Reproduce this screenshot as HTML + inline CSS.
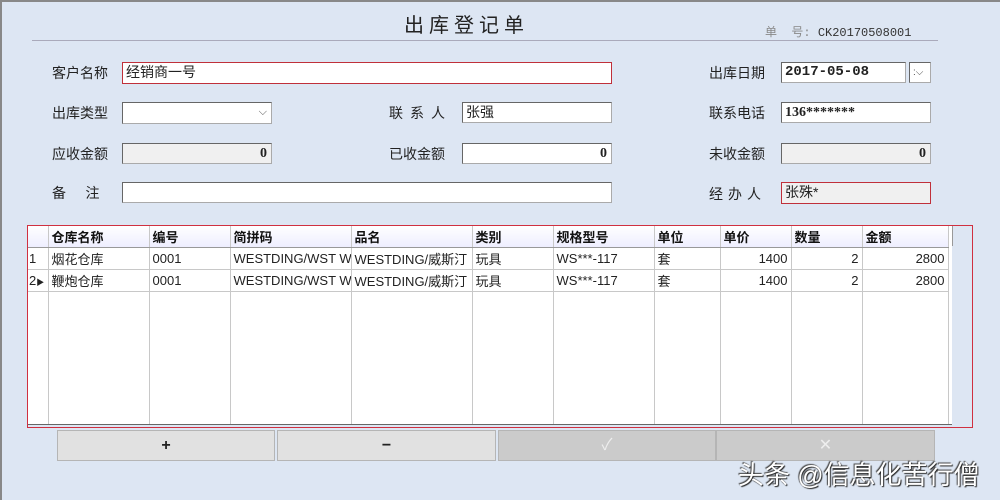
<!DOCTYPE html>
<html><head><meta charset="utf-8"><style>
*{margin:0;padding:0;box-sizing:border-box}
body{width:1000px;height:500px;background:#dde6f3;position:relative;overflow:hidden;font-family:"Liberation Sans","Noto Sans CJK SC",sans-serif;font-size:14px;color:#222}
.a{position:absolute}
.lbl{position:absolute;font-size:14px;color:#222;line-height:20px}
.f{position:absolute;background:#fff;border:1px solid #aaa;border-top-color:#666;border-left-color:#666;font-size:14px;line-height:19px;padding-left:3px}
.b{font-weight:bold;font-family:"Liberation Serif",serif}
.g{background:#f0f0f0}
.r{border:1px solid #c0303a}
.num{text-align:right;padding-right:4px;font-weight:bold;font-family:"Liberation Serif",serif}
table{border-collapse:collapse;table-layout:fixed;width:920px;position:absolute;left:28px;top:226px;background:#fff;font-size:13px}
td{border-right:1px solid #c8c8c8;border-bottom:1px solid #c8c8c8;height:22px;padding:0 3px;white-space:nowrap;overflow:hidden}
tr.h td{height:21px;font-weight:bold;color:#111;background:linear-gradient(#fff,#eef);border-bottom:1px solid #999}
td.n{text-align:right}
.btn{position:absolute;top:430px;height:31px;background:#e1e1e1;border:1px solid #b5b5b5;text-align:center;line-height:29px;font-weight:bold;font-size:16px}
</style></head><body>
<div class="a" style="left:0;top:0;width:1000px;height:2px;background:#888"></div>
<div class="a" style="left:0;top:0;width:2px;height:500px;background:#888"></div>
<div class="a" style="left:404px;top:9px;font-size:20px;letter-spacing:5px;color:#222">出库登记单</div>
<div class="a" style="left:765px;top:23px;font-size:12px;color:#888;font-family:'Liberation Mono','Noto Sans CJK SC',monospace">单&nbsp;&nbsp;号: <span style="color:#333">CK20170508001</span></div>
<div class="a" style="left:32px;top:40px;width:906px;height:1px;background:#aab"></div>

<div class="lbl" style="left:52px;top:63px">客户名称</div>
<div class="f r" style="left:122px;top:62px;width:490px;height:22px">经销商一号</div>
<div class="lbl" style="left:709px;top:63px">出库日期</div>
<div class="f b" style="left:781px;top:62px;width:125px;height:21px;font-family:'Liberation Mono',monospace">2017-05-08</div>
<div class="f" style="left:909px;top:62px;width:22px;height:21px;font-size:10px;color:#555">:⌵</div>

<div class="lbl" style="left:52px;top:103px">出库类型</div>
<div class="f" style="left:122px;top:102px;width:150px;height:22px;text-align:right;padding-right:4px;font-size:11px;color:#555">⌵</div>
<div class="lbl" style="left:389px;top:103px;letter-spacing:7px">联系人</div>
<div class="f" style="left:462px;top:102px;width:150px;height:21px">张强</div>
<div class="lbl" style="left:709px;top:103px">联系电话</div>
<div class="f b" style="left:781px;top:102px;width:150px;height:21px">136*******</div>

<div class="lbl" style="left:52px;top:144px">应收金额</div>
<div class="f g num" style="left:122px;top:143px;width:150px;height:21px">0</div>
<div class="lbl" style="left:389px;top:144px">已收金额</div>
<div class="f num" style="left:462px;top:143px;width:150px;height:21px">0</div>
<div class="lbl" style="left:709px;top:144px">未收金额</div>
<div class="f g num" style="left:781px;top:143px;width:150px;height:21px">0</div>

<div class="lbl" style="left:52px;top:183px">备&nbsp;&nbsp;&nbsp;&nbsp;&nbsp;注</div>
<div class="f" style="left:122px;top:182px;width:490px;height:21px"></div>
<div class="lbl" style="left:709px;top:184px;letter-spacing:5px">经办人</div>
<div class="f g r" style="left:781px;top:182px;width:150px;height:22px">张殊*</div>

<div class="a" style="left:28px;top:226px;width:924px;height:198px;background:#fff"></div>
<table>
<colgroup><col style="width:20px"><col style="width:101px"><col style="width:81px"><col style="width:121px"><col style="width:121px"><col style="width:81px"><col style="width:101px"><col style="width:66px"><col style="width:71px"><col style="width:71px"><col style="width:86px"></colgroup>
<tr class="h"><td></td><td>仓库名称</td><td>编号</td><td>简拼码</td><td>品名</td><td>类别</td><td>规格型号</td><td>单位</td><td>单价</td><td>数量</td><td>金额</td></tr>
<tr><td style="padding:0 1px">1</td><td>烟花仓库</td><td>0001</td><td>WESTDING/WST W</td><td>WESTDING/威斯汀</td><td>玩具</td><td>WS***-117</td><td>套</td><td class="n">1400</td><td class="n">2</td><td class="n">2800</td></tr>
<tr><td style="padding:0 1px">2<span style="font-size:8px">▶</span></td><td>鞭炮仓库</td><td>0001</td><td>WESTDING/WST W</td><td>WESTDING/威斯汀</td><td>玩具</td><td>WS***-117</td><td>套</td><td class="n">1400</td><td class="n">2</td><td class="n">2800</td></tr>
<tr><td style="height:133px"></td><td></td><td></td><td></td><td></td><td></td><td></td><td></td><td></td><td></td><td></td></tr>
</table>
<div class="a" style="left:952px;top:226px;width:1px;height:20px;background:#999"></div>
<div class="a" style="left:28px;top:424px;width:924px;height:1px;background:#666"></div>
<div class="a" style="left:27px;top:225px;width:946px;height:203px;border:1px solid #d03040"></div>

<div class="btn" style="left:57px;width:218px">+</div>
<div class="btn" style="left:277px;width:219px">−</div>
<div class="btn" style="left:498px;width:218px;background:#cbcbcb;color:#eee;font-weight:normal">✓</div>
<div class="btn" style="left:716px;width:219px;background:#cbcbcb;color:#eee;font-weight:normal">✕</div>

<div class="a" style="left:738px;top:455px;font-size:26px;color:#fff;text-shadow:1px 1px 1px #222,-1px -1px 1px #444">头条 @信息化苦行僧</div>
</body></html>
